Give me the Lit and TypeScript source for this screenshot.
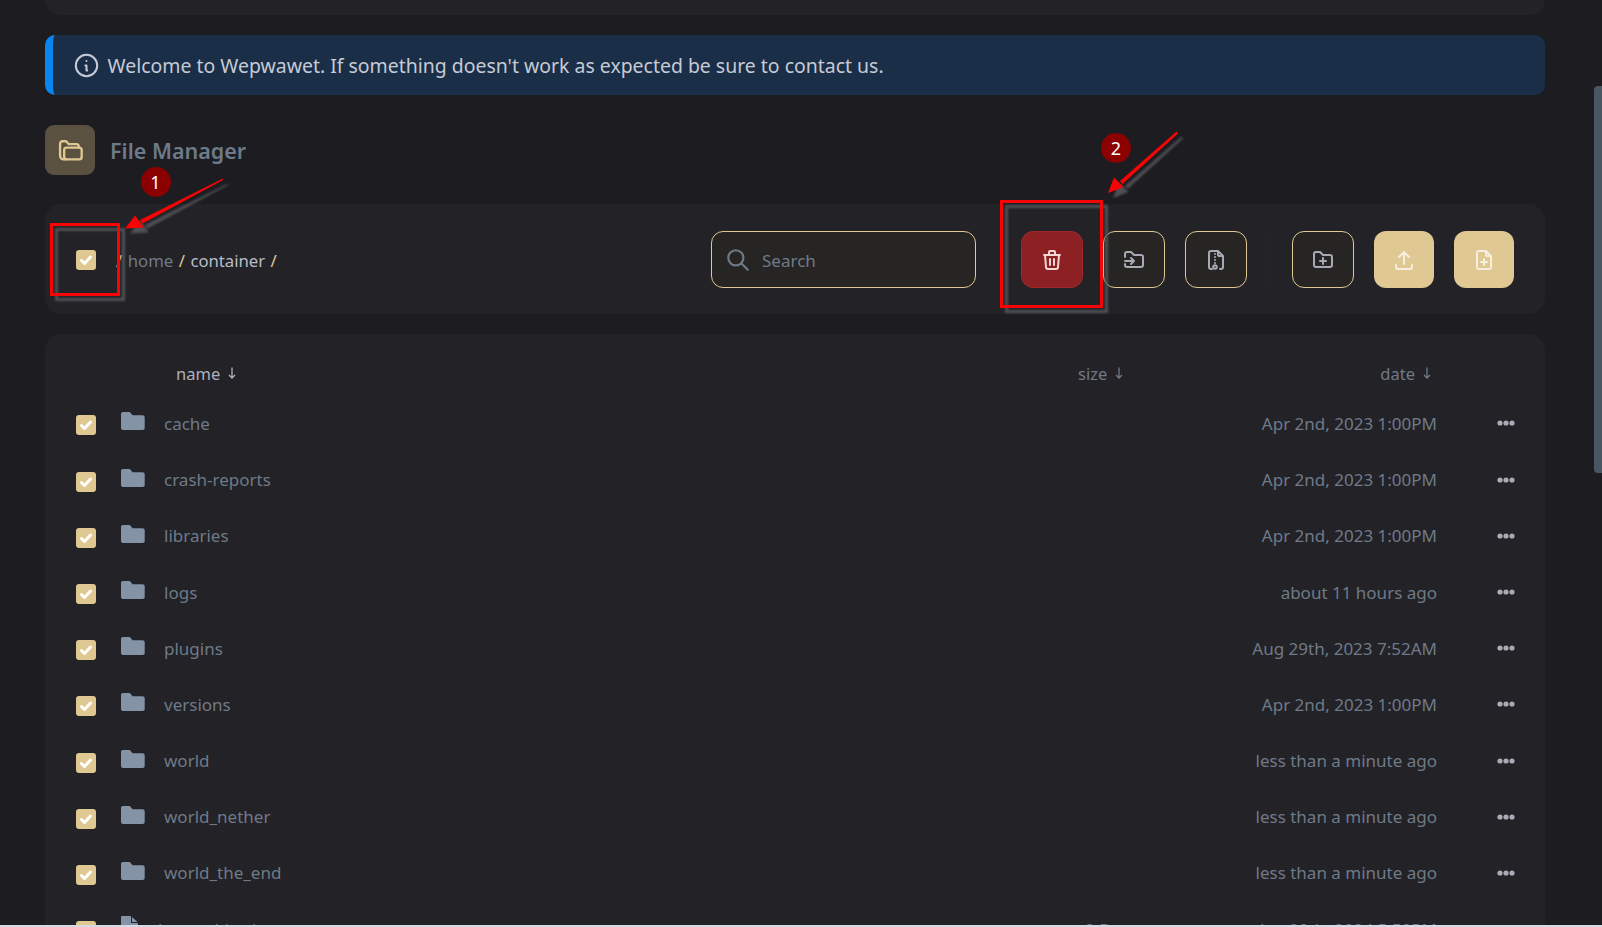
import { LitElement, html, css, svg } from "lit";
import { customElement } from "lit/decorators.js";

const rows = [
  { n: "cache", s: "", d: "Apr 2nd, 2023 1:00PM", f: true },
  { n: "crash-reports", s: "", d: "Apr 2nd, 2023 1:00PM", f: true },
  { n: "libraries", s: "", d: "Apr 2nd, 2023 1:00PM", f: true },
  { n: "logs", s: "", d: "about 11 hours ago", f: true },
  { n: "plugins", s: "", d: "Aug 29th, 2023 7:52AM", f: true },
  { n: "versions", s: "", d: "Apr 2nd, 2023 1:00PM", f: true },
  { n: "world", s: "", d: "less than a minute ago", f: true },
  { n: "world_nether", s: "", d: "less than a minute ago", f: true },
  { n: "world_the_end", s: "", d: "less than a minute ago", f: true },
  { n: "banned-ips.json", s: "2 Bytes", d: "Jan 29th, 2024 5:50PM", f: false },
];

const ico = (paths: any, cls = "ico") => html`<svg class=${cls} viewBox="0 0 24 24" fill="none" stroke="currentColor" stroke-width="2" stroke-linecap="round" stroke-linejoin="round">${paths}</svg>`;

const check = html`<span class="cb"><svg viewBox="0 0 20 20" width="20" height="20"><path d="M5.5 10.5l3 3 6-6.5" fill="none" stroke="#fff" stroke-width="3" stroke-linecap="round" stroke-linejoin="round"/></svg></span>`;

const sortArrow = html`<svg class="sort" viewBox="0 0 8 12" width="8" height="12"><path d="M4 0.5v10.5M1 8l3 3 3-3" fill="none" stroke="currentColor" stroke-width="1.3"/></svg>`;

const annotation = (shadow: boolean) => {
  const col = shadow ? "#55565a" : "#f80404";
  return svg`<g transform=${shadow ? "translate(5 5)" : ""} opacity=${shadow ? 0.9 : 1} filter=${shadow ? "url(#soft)" : ""}>
    <rect x="51.5" y="224.5" width="67" height="70" fill="none" stroke=${col} stroke-width="3"/>
    <rect x="1001.5" y="201.5" width="100" height="105" fill="none" stroke=${col} stroke-width="3"/>
    <path d="M223 178.5L140 220l2.5 3.5L223 180z" fill=${col}/>
    <path d="M125 228.5l10-13 9 12z" fill=${col}/>
    <path d="M1176.5 131.5L1120 181l2.5 3L1178 133.5z" fill=${col}/>
    <path d="M1108 193l6-15.5 9.5 9.5z" fill=${col}/>
  </g>`;
};

@customElement("app-root")
export class AppRoot extends LitElement {
  static styles = css`
    :host { display: block; position: relative; height: 927px; overflow: hidden; background: #1c1c21; font-family: "Noto Sans", sans-serif; font-size: 17px; color: #6f7a87; }
    .page { padding: 0 57px 0 45px; display: flex; flex-direction: column; }
    .card { background: #222227; border-radius: 16px; }
    .topcard { height: 15px; border-radius: 0 0 16px 16px; }
    .alert { margin-top: 20px; height: 60px; display: flex; align-items: center; gap: 7.5px; padding-left: 20px; background: #1a2f47; border-left: 8px solid #0a84f0; border-radius: 10px; color: #c6cad6; font-size: 19.45px; box-sizing: border-box; }
    .alert .ico { width: 27px; height: 27px; stroke-width: 1.8; }
    .title { margin-top: 30px; display: flex; align-items: center; gap: 15px; height: 50px; }
    .title-ico { width: 50px; height: 50px; border-radius: 9px; background: #5b5140; color: #dfc892; display: flex; align-items: center; justify-content: center; }
    .title-ico svg { width: 28px; height: 28px; }
    .title h1 { margin: 0; font-size: 21.5px; font-weight: 600; color: #6c7a89; }
    .toolbar { margin-top: 29px; height: 110px; padding: 1px 31px 0; display: flex; align-items: center; box-sizing: border-box; }
    .crumbs { margin-left: 20px; padding-top: 2px; display: flex; gap: 5.5px; color: #b9bcc8; font-size: 16.7px; }
    .crumbs .sep { color: #dfc892; }
    .crumbs .home { color: #6f7a87; }
    .search { margin-left: auto; width: 265px; height: 57px; box-sizing: border-box; border: 1.5px solid #dfc892; border-radius: 12px; background: #262523; display: flex; align-items: center; gap: 11px; padding-left: 13px; }
    .search span { padding-top: 2px; }
    .search .ico { width: 26px; height: 26px; color: #6f7a87; }
    .btn { width: 62px; height: 57px; box-sizing: border-box; border-radius: 12px; display: flex; align-items: center; justify-content: center; color: #a9a9b6; }
    .btn .ico { width: 24px; height: 24px; }
    .outline { background: #262523; border: 1.5px solid #dfc892; }
    .danger { background: #8d2023; border: 1px solid #a0282b; color: #f6d5d5; margin-left: 45px; }
    .solid { background: #dfc892; color: #f6efdf; width: 60px; }
    .gap { margin-left: 20px; }
    .divider { width: 1px; height: 57px; background: #26262a; margin-left: 22px; margin-right: 22px; }
    .table { margin-top: 20px; flex: 1; padding: 0 31px; height: 640px; overflow: hidden; }
    .row { display: flex; align-items: center; height: 56.2px; }
    .head { padding-top: 17px; box-sizing: content-box; height: 44.4px; font-size: 16.5px; }
    .head .nm { color: #b0b0bd; padding-left: 12px; display: flex; align-items: center; gap: 8px; }
    .head .sz, .head .dt { display: flex; align-items: center; gap: 8px; }
    .head .sz { padding-left: 1px; box-sizing: border-box; }
    .head .dt { justify-content: flex-end; padding-right: 6px; box-sizing: border-box; }
    .col-cb { width: 45px; flex: none; display: flex; padding-top: 4px; }
    .col-ico { width: 43px; flex: none; display: flex; }
    .nm { flex: 1; }
    .sz { width: 160px; flex: none; }
    .cell-sz { padding-left: 8px; box-sizing: border-box; }
    .dt { width: 200px; flex: none; text-align: right; white-space: nowrap; }
    .act { width: 77px; flex: none; display: flex; justify-content: flex-end; }
    .cb { width: 20px; height: 20px; border-radius: 3px; background: #dfc892; display: block; }
    .cb svg { display: block; }
    .folder { width: 24px; height: 20px; color: #8494a6; margin-top: -4px; }
    .file { width: 17px; height: 22px; color: #8494a6; margin-top: -5px; }
    .name-file { margin-left: -6px; }
    .dots { width: 18px; height: 6px; color: #a9abb5; margin-right: -1px; }
    .overlay { position: absolute; left: 0; top: 0; width: 1602px; height: 927px; pointer-events: none; }
    .badge-text { font-family: "Noto Sans", sans-serif; font-size: 18px; fill: #fff; text-anchor: middle; }
    .scroll { position: absolute; left: 1594px; top: 86px; width: 8px; height: 387px; background: #4b5663; border-radius: 4px 0 0 4px; }
    .strip { position: absolute; left: 0; right: 0; bottom: 0; height: 2px; background: #d5dae4; }
  `;

  render() {
    return html`
      <div class="page">
        <div class="card topcard"></div>
        <div class="alert">
          ${ico(svg`<circle cx="12" cy="12" r="9.5"/><path d="M12 8h.01M11 12h1v4.5h.6"/>`)}
          <span>Welcome to Wepwawet. If something doesn't work as expected be sure to contact us.</span>
        </div>
        <div class="title">
          <div class="title-ico">${ico(svg`<path d="M3.5 17V6.5a2 2 0 0 1 2-2h3.2l2.3 2.5h6.5a2 2 0 0 1 2 2v1"/><rect x="7" y="10" width="15" height="10" rx="2"/><path d="M3.5 17a3 3 0 0 0 3 3h2"/>`)}</div>
          <h1>File Manager</h1>
        </div>
        <div class="card toolbar">
          ${check}
          <div class="crumbs"><span class="sep">/</span><span class="home">home</span><span class="sep">/</span><span>container</span><span class="sep">/</span></div>
          <div class="search">${ico(svg`<circle cx="10" cy="10" r="7"/><path d="M21 21l-6-6"/>`)}<span>Search</span></div>
          <div class="btn danger">${ico(svg`<path d="M4 7h16M10 11v6M14 11v6M5 7l1 12a2 2 0 0 0 2 2h8a2 2 0 0 0 2-2l1-12M9 7V4a1 1 0 0 1 1-1h4a1 1 0 0 1 1 1v3"/>`)}</div>
          <div class="btn outline gap">${ico(svg`<path d="M3 9V6a2 2 0 0 1 2-2h4l3 3h7a2 2 0 0 1 2 2v8a2 2 0 0 1-2 2H5a2 2 0 0 1-2-2v-1M3 13h9M9 10l3 3-3 3"/>`)}</div>
          <div class="btn outline gap">${ico(svg`<path d="M8 21H7a2 2 0 0 1-2-2V5a2 2 0 0 1 2-2h7l5 5v11a2 2 0 0 1-2 2h-1M14 3v4a1 1 0 0 0 1 1h4M11 6v.01M11 9v.01M11 12v.01M11 15v.01"/><circle cx="11" cy="19" r="1.8"/>`)}</div>
          <div class="divider"></div>
          <div class="btn outline">${ico(svg`<path d="M5 4h4l3 3h7a2 2 0 0 1 2 2v8a2 2 0 0 1-2 2H5a2 2 0 0 1-2-2V6a2 2 0 0 1 2-2M12 10v6M9 13h6"/>`)}</div>
          <div class="btn solid gap">${ico(svg`<path d="M4 17v2a2 2 0 0 0 2 2h12a2 2 0 0 0 2-2v-2M7 9l5-5 5 5M12 4v12"/>`)}</div>
          <div class="btn solid gap">${ico(svg`<path d="M14 3v4a1 1 0 0 0 1 1h4M17 21H7a2 2 0 0 1-2-2V5a2 2 0 0 1 2-2h7l5 5v11a2 2 0 0 1-2 2zM12 11v6M9 14h6"/>`)}</div>
        </div>
        <div class="card table">
          <div class="row head">
            <div class="col-cb"></div><div class="col-ico"></div>
            <div class="nm"><span>name</span>${sortArrow}</div>
            <div class="sz"><span>size</span>${sortArrow}</div>
            <div class="dt"><span>date</span>${sortArrow}</div>
            <div class="act"></div>
          </div>
          ${rows.map((r) => html`
            <div class="row">
              <div class="col-cb">${check}</div>
              <div class="col-ico">${r.f
                ? html`<svg class="folder" viewBox="0 0 24 20"><path d="M2.5 1h6.2l3 3.2h10a2 2 0 0 1 2 2V17a2 2 0 0 1-2 2H2a2 2 0 0 1-2-2V3.2A2.2 2.2 0 0 1 2.5 1z" fill="currentColor"/></svg>`
                : html`<svg class="file" viewBox="0 0 17 22"><path d="M1 0h9v7h7v15H0V1a1 1 0 0 1 1-1zM11 1l5.5 5H11z" fill="currentColor"/></svg>`}</div>
              <div class="nm ${r.f ? "" : "name-file"}">${r.n}</div>
              <div class="sz cell-sz">${r.s}</div>
              <div class="dt">${r.d}</div>
              <div class="act"><svg class="dots" viewBox="0 0 18 6"><circle cx="3" cy="3" r="2.6" fill="currentColor"/><circle cx="9" cy="3" r="2.6" fill="currentColor"/><circle cx="15" cy="3" r="2.6" fill="currentColor"/></svg></div>
            </div>`)}
        </div>
      </div>
      <svg class="overlay" viewBox="0 0 1602 927">
        <defs><filter id="soft"><feGaussianBlur stdDeviation="0.8"/></filter></defs>
        ${annotation(true)}
        ${annotation(false)}
        <circle cx="156" cy="182" r="15" fill="#8b0000"/>
        <text class="badge-text" x="155.5" y="188.5">1</text>
        <circle cx="1116" cy="148" r="15" fill="#8b0000"/>
        <text class="badge-text" x="1116" y="154.5">2</text>
      </svg>
      <div class="scroll"></div>
      <div class="strip"></div>
    `;
  }
}
